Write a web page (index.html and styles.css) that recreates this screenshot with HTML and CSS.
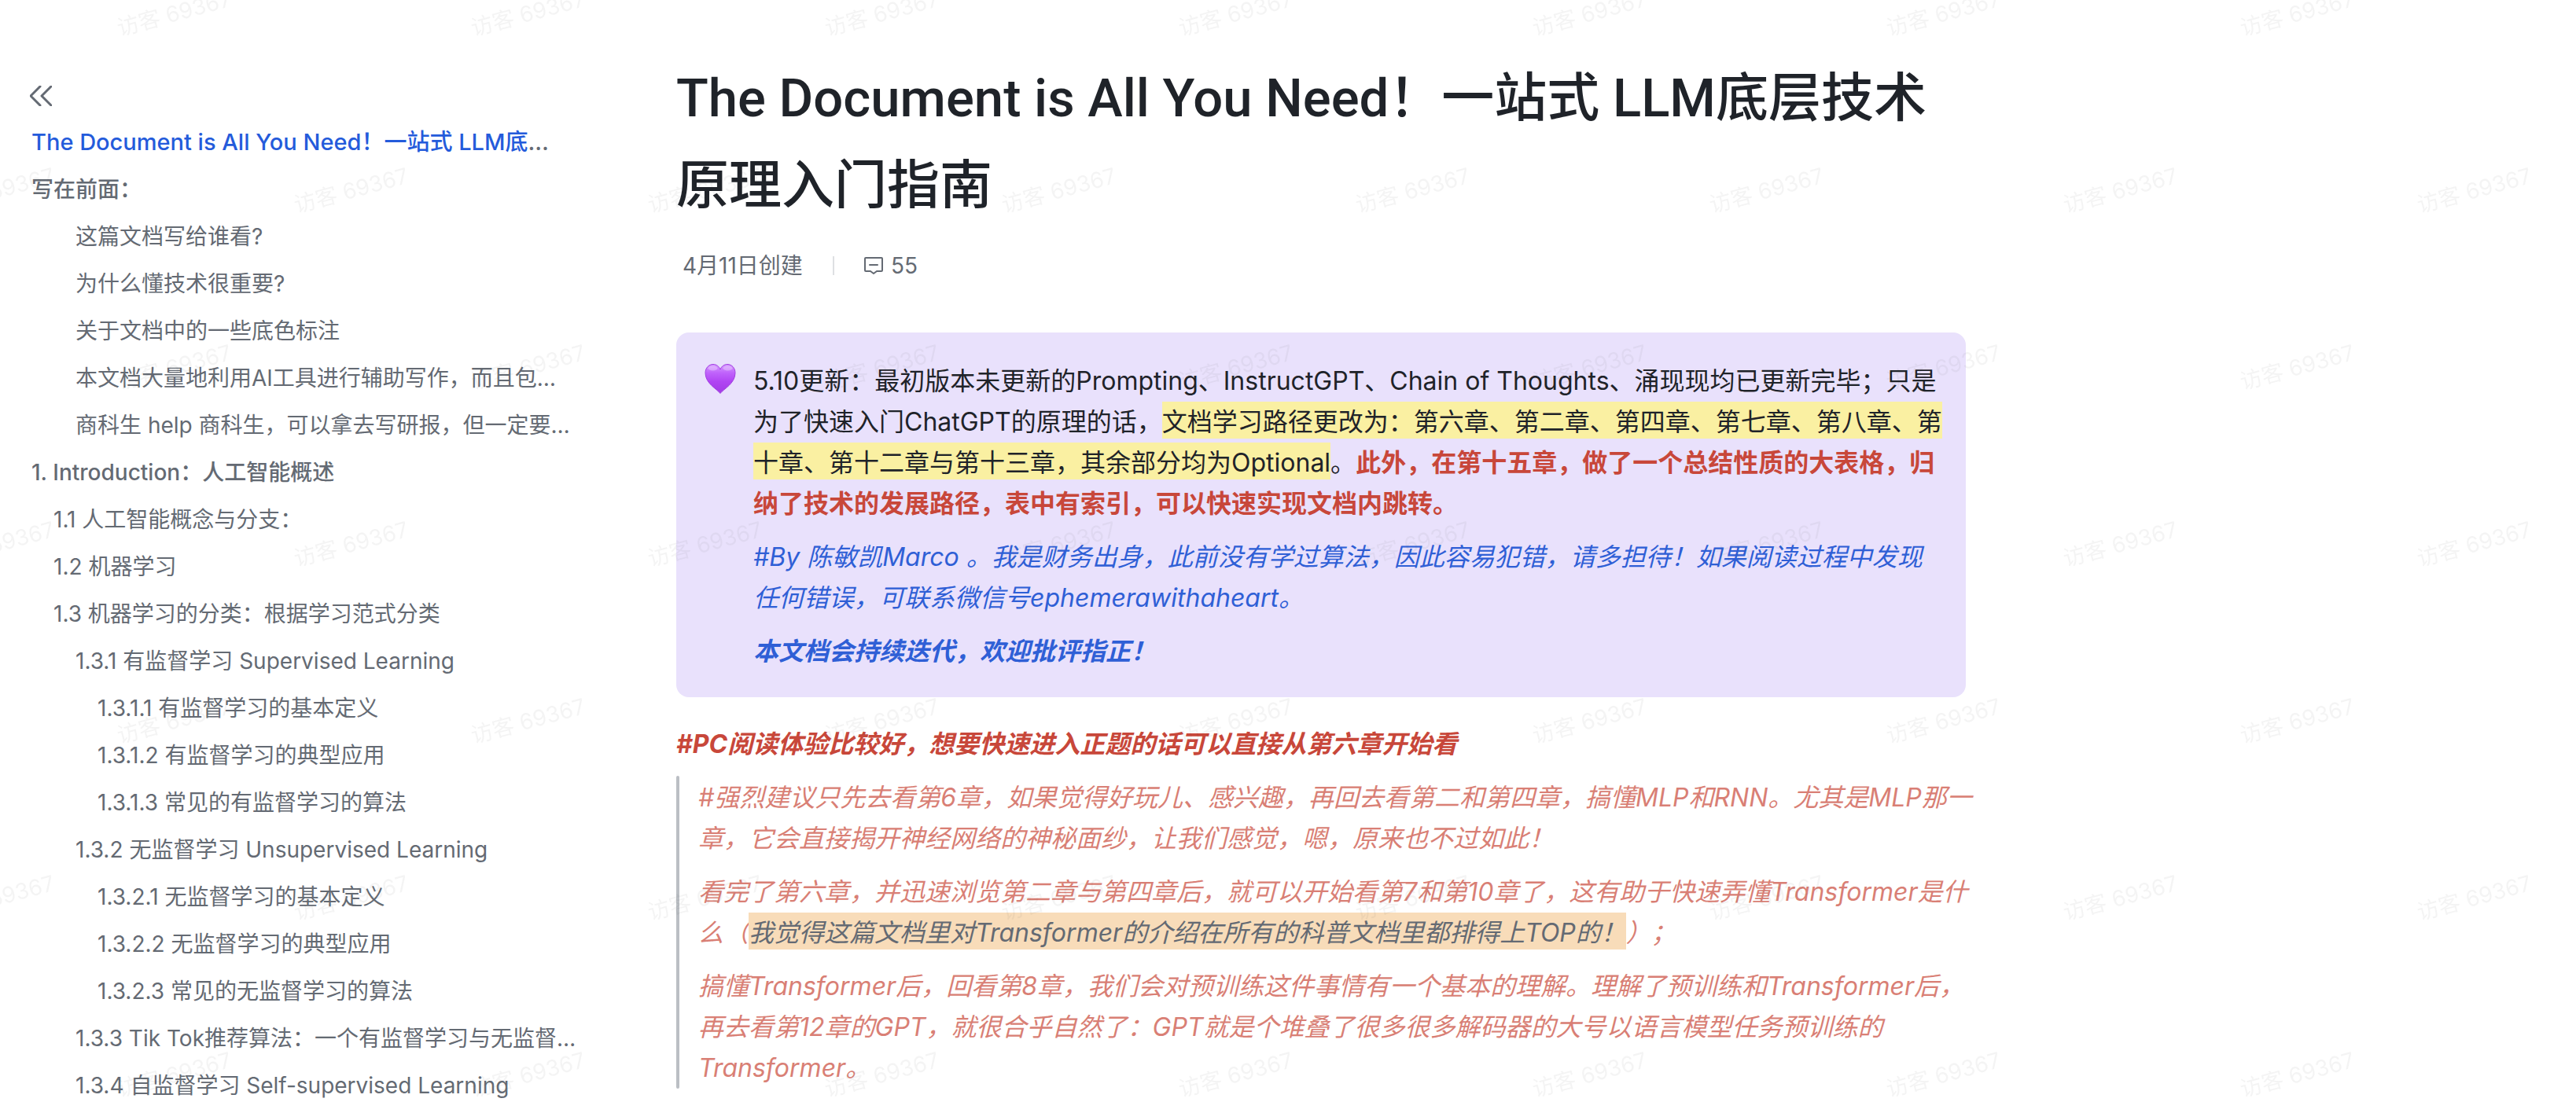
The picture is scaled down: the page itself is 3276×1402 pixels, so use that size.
FILE: index.html
```html
<!DOCTYPE html>
<html lang="zh-CN">
<head>
<meta charset="utf-8">
<meta name="viewport" content="width=device-width, initial-scale=1">
<title>The Document is All You Need！一站式 LLM底层技术原理入门指南</title>
<link rel="stylesheet" href="styles.css">
</head>
<body>
<div class="app">
  <nav class="outline" aria-label="目录">
    <button class="collapse" type="button" aria-label="收起目录">
      <svg viewBox="0 0 28 26" width="28" height="26" fill="none" stroke="currentColor" stroke-width="3" stroke-linecap="round" stroke-linejoin="round"><path d="M13 1 1 13l12 12M27 1 15 13l12 12"/></svg>
    </button>
    <ul class="toc">
      <li class="strong title"><a class="current" href="#top">The Document is All You Need！一站式 LLM底</a>…</li>
      <li class="strong"><a href="#s0">写在前面：</a></li>
      <li class="level-2"><a href="#s0">这篇文档写给谁看?</a></li>
      <li class="level-2"><a href="#s0">为什么懂技术很重要?</a></li>
      <li class="level-2"><a href="#s0">关于文档中的一些底色标注</a></li>
      <li class="level-2"><a href="#s0">本文档大量地利用AI工具进行辅助写作，而且包…</a></li>
      <li class="level-2"><a href="#s0">商科生 help 商科生，可以拿去写研报，但一定要…</a></li>
      <li class="strong"><a href="#s1">1. Introduction：人工智能概述</a></li>
      <li class="level-1"><a href="#s1">1.1 人工智能概念与分支：</a></li>
      <li class="level-1"><a href="#s1">1.2 机器学习</a></li>
      <li class="level-1"><a href="#s1">1.3 机器学习的分类：根据学习范式分类</a></li>
      <li class="level-2"><a href="#s1">1.3.1 有监督学习 Supervised Learning</a></li>
      <li class="level-3"><a href="#s1">1.3.1.1 有监督学习的基本定义</a></li>
      <li class="level-3"><a href="#s1">1.3.1.2 有监督学习的典型应用</a></li>
      <li class="level-3"><a href="#s1">1.3.1.3 常见的有监督学习的算法</a></li>
      <li class="level-2"><a href="#s1">1.3.2 无监督学习 Unsupervised Learning</a></li>
      <li class="level-3"><a href="#s1">1.3.2.1 无监督学习的基本定义</a></li>
      <li class="level-3"><a href="#s1">1.3.2.2 无监督学习的典型应用</a></li>
      <li class="level-3"><a href="#s1">1.3.2.3 常见的无监督学习的算法</a></li>
      <li class="level-2"><a href="#s1">1.3.3 Tik Tok推荐算法：一个有监督学习与无监督…</a></li>
      <li class="level-2"><a href="#s1">1.3.4 自监督学习 Self-supervised Learning</a></li>
    </ul>
  </nav>

  <main class="doc" id="top">
    <h1>The Document is All You Need！一站式 LLM底层技术<br>原理入门指南</h1>
    <div class="meta">
      <span>4月11日创建</span>
      <span class="divider"></span>
      <button class="comments" type="button" aria-label="55 条评论">
        <svg viewBox="0 0 24 24" width="24" height="24" fill="none" stroke="currentColor" stroke-width="2" stroke-linecap="round" stroke-linejoin="round"><path d="M2 2h20a1 1 0 0 1 1 1v15a1 1 0 0 1-1 1h-6l-4 3-4-3H2a1 1 0 0 1-1-1V3a1 1 0 0 1 1-1zM7 11h10"/></svg>
        55
      </button>
    </div>

    <section class="callout">
      <svg class="heart" viewBox="0 0 40 38" width="40" height="38" aria-hidden="true">
        <defs>
          <linearGradient id="heart-fill" x1="0" y1="0" x2="0" y2="1"><stop offset="0" stop-color="#d69aff"/><stop offset=".3" stop-color="#bf62fb"/><stop offset=".6" stop-color="#b044f3"/><stop offset="1" stop-color="#a23ae4"/></linearGradient>
        </defs>
        <path fill="url(#heart-fill)" stroke="#a13fe0" stroke-width="1" d="M20 37.500C16 32 1 25 1 11.500 1 5 5.500.5 11 .5c4 0 7.500 2.500 9 6.500 1.500-4 5-6.500 9-6.500 5.500 0 10 4.500 10 11 0 13.500-15 20.500-19 26z"/>
        <ellipse cx="10.500" cy="5.500" rx="6" ry="3" fill="#fff" opacity=".3"/><ellipse cx="29.500" cy="5.500" rx="6" ry="3" fill="#fff" opacity=".3"/>
      </svg>
      <div class="callout-text">
        <p>5.10更新：最初版本未更新的Prompting、InstructGPT、Chain of Thoughts、涌现现均已更新完毕；只是<br>为了快速入门ChatGPT的原理的话，<mark>文档学习路径更改为：第六章、第二章、第四章、第七章、第八章、第</mark><br><mark>十章、第十二章与第十三章，其余部分均为Optional</mark>。<strong>此外，在第十五章，做了一个总结性质的大表格，归<br>纳了技术的发展路径，表中有索引，可以快速实现文档内跳转。</strong></p>
        <p class="author">#By 陈敏凯Marco 。我是财务出身，此前没有学过算法，因此容易犯错，请多担待！如果阅读过程中发现<br>任何错误，可联系微信号ephemerawithaheart。</p>
        <p class="author"><b>本文档会持续迭代，欢迎批评指正！</b></p>
      </div>
    </section>

    <p class="notice" id="s0">#PC阅读体验比较好，想要快速进入正题的话可以直接从第六章开始看</p>
    <blockquote id="s1">
      <p>#强烈建议只先去看第6章，如果觉得好玩儿、感兴趣，再回去看第二和第四章，搞懂MLP和RNN。尤其是MLP那一<br>章，它会直接揭开神经网络的神秘面纱，让我们感觉，嗯，原来也不过如此！</p>
      <p>看完了第六章，并迅速浏览第二章与第四章后，就可以开始看第7和第10章了，这有助于快速弄懂Transformer是什<br>么（<mark class="peach">我觉得这篇文档里对Transformer的介绍在所有的科普文档里都排得上TOP的！</mark>）；</p>
      <p>搞懂Transformer后，回看第8章，我们会对预训练这件事情有一个基本的理解。理解了预训练和Transformer后，<br>再去看第12章的GPT，就很合乎自然了：GPT就是个堆叠了很多很多解码器的大号以语言模型任务预训练的<br>Transformer。</p>
    </blockquote>
  </main>

  <svg class="watermark" width="100%" height="100%" aria-hidden="true">
    <defs>
      <pattern id="visitor" width="450" height="450" patternUnits="userSpaceOnUse">
        <text transform="translate(152 46) rotate(-15)">访客 69367</text>
        <text transform="translate(152 496) rotate(-15)">访客 69367</text>
        <text transform="translate(377 271) rotate(-15)">访客 69367</text>
        <text transform="translate(-73 271) rotate(-15)">访客 69367</text>
      </pattern>
    </defs>
    <rect width="100%" height="100%" fill="url(#visitor)"/>
  </svg>
</div>
</body>
</html>
```

FILE: styles.css
```css
* {
  box-sizing: border-box;
}

body {
  margin: 0;
  background: #fff;
  color: #1f2329;
  font-family: Inter, "Noto Sans CJK SC", sans-serif;
  font-size: 32px;
  line-height: 52px;
  text-spacing-trim: space-all;
}

p, h1, ul, blockquote {
  margin: 0;
  padding: 0;
}

button {
  margin: 0;
  padding: 0;
  border: 0;
  background: none;
  color: inherit;
  font: inherit;
}

a {
  color: inherit;
  text-decoration: none;
}

.app {
  position: relative;
  display: flex;
  gap: 100px;
  height: 100vh;
  overflow: hidden;
}

/* Outline */
.outline {
  flex: 0 0 760px;
  padding: 109px 24px 0 40px;
  color: #646a73;
  font-size: 28px;
  line-height: 60px;
}

.collapse {
  display: block;
  margin: 0 0 16px -2px;
  line-height: 0;
}

.toc {
  list-style: none;
  white-space: nowrap;
}

.strong {
  font-weight: 500;
}

.title {
  font-size: 29px;
}

.current {
  color: #245bdb;
}

.level-1 {
  padding-left: 28px;
}

.level-2 {
  padding-left: 56px;
}

.level-3 {
  padding-left: 84px;
}

/* Document */
.doc {
  flex: 0 1 1640px;
  min-width: 0;
  padding-top: 70px;
  white-space: nowrap;
}

h1 {
  font-family: Roboto, "Noto Sans CJK SC", sans-serif;
  font-size: 67px;
  font-weight: 500;
  line-height: 111px;
}

.meta {
  display: flex;
  align-items: center;
  margin: 26px 0 65px;
  padding-left: 8px;
  color: #646a73;
  font-size: 28px;
  line-height: 40px;
}

.divider {
  width: 2px;
  height: 24px;
  margin: 0 38px;
  background: #dee0e3;
}

.comments {
  display: flex;
  align-items: center;
  gap: 10px;
}

.callout {
  display: flex;
  gap: 22px;
  padding: 36px 32px 32px 36px;
  border-radius: 16px;
  background: #e9e1fc;
}

.heart {
  flex: none;
  margin-top: 4px;
}

.callout-text,
blockquote {
  display: flex;
  flex-direction: column;
  gap: 16px;
}

mark {
  padding: 6px 0 2px;
  background: #faf0a2;
  color: inherit;
}

strong {
  color: #c8473a;
  font-weight: 700;
}

.author {
  color: #2f5fd6;
  font-style: italic;
}

.notice {
  margin: 34px 0 14px;
  color: #c8473a;
  font-style: italic;
  font-weight: 700;
}

blockquote {
  position: relative;
  padding: 2px 0 0 28px;
  color: #d97f75;
  font-style: italic;
}

blockquote::before {
  content: "";
  position: absolute;
  inset: 0 auto 0 0;
  width: 4px;
  border-radius: 2px;
  background: #bbbfc4;
}

mark.peach {
  background: #f8dcb9;
  color: #646a73;
}

/* Visitor mark repeated over the whole page */
.watermark {
  position: absolute;
  inset: 0;
  pointer-events: none;
  fill: #1f2329;
  font-size: 28px;
}

.watermark text {
  opacity: 0.05;
}
```
